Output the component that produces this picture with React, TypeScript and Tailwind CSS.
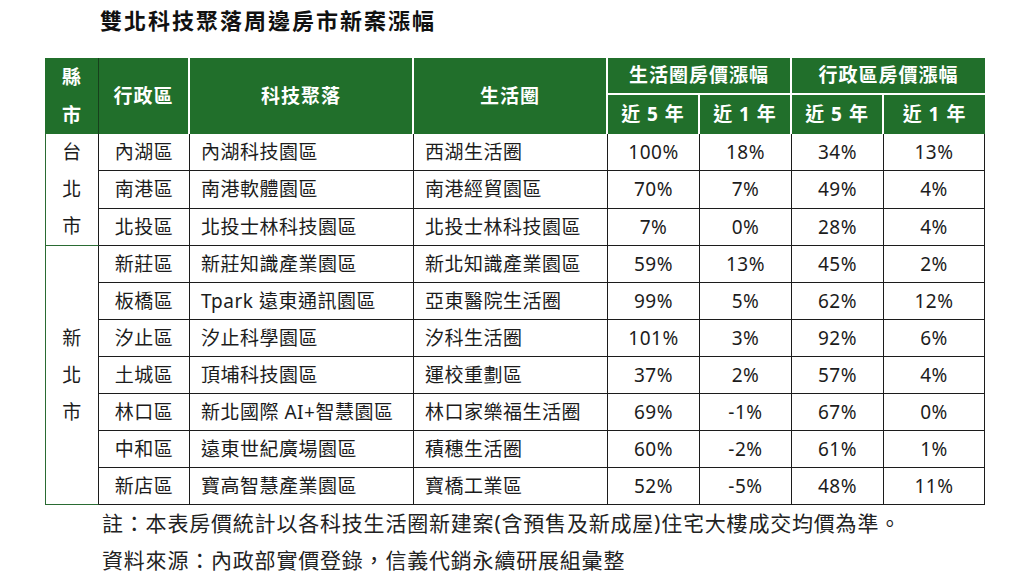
import React from "react";

type Row = {
  district: string;
  cluster: string;
  area: string;
  a5: string;
  a1: string;
  d5: string;
  d1: string;
};

const taipei: Row[] = [
  { district: "內湖區", cluster: "內湖科技園區", area: "西湖生活圈", a5: "100%", a1: "18%", d5: "34%", d1: "13%" },
  { district: "南港區", cluster: "南港軟體園區", area: "南港經貿園區", a5: "70%", a1: "7%", d5: "49%", d1: "4%" },
  { district: "北投區", cluster: "北投士林科技園區", area: "北投士林科技園區", a5: "7%", a1: "0%", d5: "28%", d1: "4%" },
];

const newTaipei: Row[] = [
  { district: "新莊區", cluster: "新莊知識產業園區", area: "新北知識產業園區", a5: "59%", a1: "13%", d5: "45%", d1: "2%" },
  { district: "板橋區", cluster: "Tpark 遠東通訊園區", area: "亞東醫院生活圈", a5: "99%", a1: "5%", d5: "62%", d1: "12%" },
  { district: "汐止區", cluster: "汐止科學園區", area: "汐科生活圈", a5: "101%", a1: "3%", d5: "92%", d1: "6%" },
  { district: "土城區", cluster: "頂埔科技園區", area: "運校重劃區", a5: "37%", a1: "2%", d5: "57%", d1: "4%" },
  { district: "林口區", cluster: "新北國際 AI+智慧園區", area: "林口家樂福生活圈", a5: "69%", a1: "-1%", d5: "67%", d1: "0%" },
  { district: "中和區", cluster: "遠東世紀廣場園區", area: "積穗生活圈", a5: "60%", a1: "-2%", d5: "61%", d1: "1%" },
  { district: "新店區", cluster: "寶高智慧產業園區", area: "寶橋工業區", a5: "52%", a1: "-5%", d5: "48%", d1: "11%" },
];

const cell = "border-r border-b border-[#1c1c1c] px-0";
const hd = "bg-[#216f2b] text-white font-bold text-[19px] tracking-[1px] text-center";

function CityCell({ chars, span }: { chars: string[]; span: number }) {
  return (
    <td
      rowSpan={span}
      className="border-l border-b border-r border-l-[#2a6b33] border-b-[#2a6b33] border-r-[#1c1c1c] text-center align-middle leading-[37px]"
    >
      {chars.map((c) => (
        <div key={c}>{c}</div>
      ))}
    </td>
  );
}

function DataRow({ row, city }: { row: Row; city?: React.ReactNode }) {
  return (
    <tr className="h-[37px]">
      {city}
      <td className={`${cell} text-center`}>{row.district}</td>
      <td className={`${cell} pl-[11px]`}>{row.cluster}</td>
      <td className={`${cell} pl-[11px]`}>{row.area}</td>
      <td className={`${cell} text-center`}>{row.a5}</td>
      <td className={`${cell} text-center`}>{row.a1}</td>
      <td className={`${cell} text-center`}>{row.d5}</td>
      <td className={`${cell} text-center`}>{row.d1}</td>
    </tr>
  );
}

export default function App() {
  return (
    <div
      className="w-[1020px] h-[585px] bg-white text-[#1c1c1c] overflow-hidden"
      style={{ fontFamily: '"Noto Sans", "Noto Sans CJK TC", sans-serif' }}
    >
      <h1 className="pl-[100px] pt-[5px] text-[22px] leading-[30px] font-bold tracking-[2px] text-[#111]">
        雙北科技聚落周邊房市新案漲幅
      </h1>

      <table className="ml-[45px] mt-[23px] w-[940px] table-fixed border-separate border-spacing-0 text-[19px]">
        <colgroup>
          <col className="w-[54px]" />
          <col className="w-[91px]" />
          <col className="w-[224px]" />
          <col className="w-[194px]" />
          <col className="w-[92px]" />
          <col className="w-[92px]" />
          <col className="w-[92px]" />
          <col className="w-[101px]" />
        </colgroup>
        <thead>
          <tr className="h-[37px]">
            <th rowSpan={2} className={`${hd} border-r border-[#17401c] leading-[38px] tracking-normal`}>
              <div>縣</div>
              <div>市</div>
            </th>
            <th rowSpan={2} className={`${hd} border-r-2 border-white`}>行政區</th>
            <th rowSpan={2} className={`${hd} border-r-2 border-white`}>科技聚落</th>
            <th rowSpan={2} className={`${hd} border-r-2 border-white`}>生活圈</th>
            <th colSpan={2} className={`${hd} border-r-2 border-b-2 border-white`}>生活圈房價漲幅</th>
            <th colSpan={2} className={`${hd} border-b-2 border-white`}>行政區房價漲幅</th>
          </tr>
          <tr className="h-[38px]">
            <th className={`${hd} border-r-2 border-white`}>近 5 年</th>
            <th className={`${hd} border-r-2 border-white`}>近 1 年</th>
            <th className={`${hd} border-r-2 border-white`}>近 5 年</th>
            <th className={hd}>近 1 年</th>
          </tr>
        </thead>
        <tbody className="tracking-[0.5px]">
          {taipei.map((r, i) => (
            <DataRow
              key={r.district}
              row={r}
              city={i === 0 ? <CityCell chars={["台", "北", "市"]} span={3} /> : undefined}
            />
          ))}
          {newTaipei.map((r, i) => (
            <DataRow
              key={r.district}
              row={r}
              city={i === 0 ? <CityCell chars={["新", "北", "市"]} span={7} /> : undefined}
            />
          ))}
        </tbody>
      </table>

      <div className="pl-[102px] text-[21px] leading-[37px] tracking-[0.8px] text-[#222]">
        <p>註：本表房價統計以各科技生活圈新建案(含預售及新成屋)住宅大樓成交均價為準。</p>
        <p>資料來源：內政部實價登錄，信義代銷永續研展組彙整</p>
      </div>
    </div>
  );
}
